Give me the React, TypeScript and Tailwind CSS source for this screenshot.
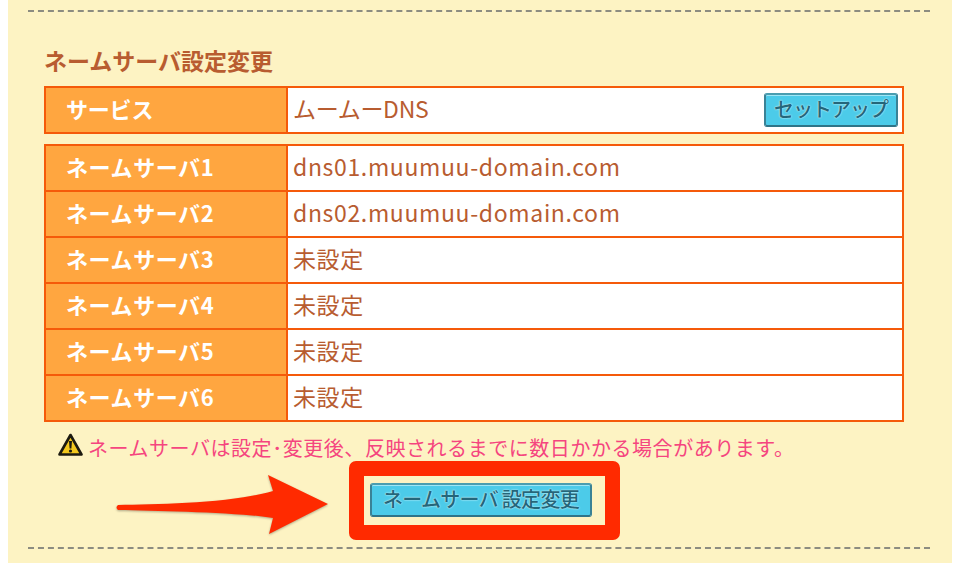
const font = "font-['Noto_Sans_CJK_JP','Noto_Sans',sans-serif]";

const servers = [
  { label: 'ネームサーバ1', value: 'dns01.muumuu-domain.com', track: 'tracking-[0.65px]' },
  { label: 'ネームサーバ2', value: 'dns02.muumuu-domain.com', track: 'tracking-[0.65px]' },
  { label: 'ネームサーバ3', value: '未設定', track: 'tracking-[0.6px]' },
  { label: 'ネームサーバ4', value: '未設定', track: 'tracking-[0.6px]' },
  { label: 'ネームサーバ5', value: '未設定', track: 'tracking-[0.6px]' },
  { label: 'ネームサーバ6', value: '未設定', track: 'tracking-[0.6px]' },
];

const Row = ({ label, value, track, labelTrack, last, children }: { label: string; value: string; track: string; labelTrack: string; last?: boolean; children?: React.ReactNode }) => (
  <div className={last ? 'flex h-[44px]' : 'flex h-[46px] border-b-2 border-[#f55a0a]'}>
    <div className={`w-[242px] shrink-0 border-r-2 border-[#f55a0a] bg-[#ffa640] pl-[20px] pb-[3px] flex items-center text-[22px] font-bold text-white ${labelTrack}`}>
      {label}
    </div>
    <div className="flex-1 bg-white pl-[5px] pr-[4px] flex items-center justify-between text-[23px] text-[#b85c30]">
      <span className={`pb-[3px] ${track}`}>{value}</span>
      {children}
    </div>
  </div>
);

const SkyButton = ({ label, className }: { label: string; className: string }) => (
  <div
    className={`flex items-center justify-center rounded-[3px] border-2 border-[#3a8296] border-t-[#4a9db0] border-b-[#2f7488] bg-[#4ccbe9] pb-[2px] font-medium text-[#24667a] shadow-[inset_0_1px_0_#9fe6f5] [text-shadow:0_0_2px_#c8f4fb,0_0_1px_#c8f4fb] ${className}`}
  >
    {label}
  </div>
);

export default function App() {
  return (
    <div className={`h-[563px] w-[960px] overflow-hidden bg-white px-2 ${font}`}>
      <div className="relative h-full bg-[#fdf3c3] px-[20px] pt-[10px]">
        <div className="mr-[2px] border-t-2 border-dashed border-[#8c8c80]" />

        <h2 className="mt-[33px] ml-[16px] text-[23px] leading-[30px] font-bold text-[#b85c30]">
          ネームサーバ設定変更
        </h2>

        <div className="mt-[11px] ml-[16px] w-[860px] border-2 border-[#f55a0a]">
          <Row label="サービス" labelTrack="tracking-[-0.2px]" value="ムームーDNS" track="tracking-[-0.3px]" last>
            <SkyButton label="セットアップ" className="h-[34px] w-[134px] text-[20px] tracking-[-1px]" />
          </Row>
        </div>

        <div className="mt-[10px] ml-[16px] w-[860px] border-2 border-[#f55a0a]">
          {servers.map((s, i) => (
            <Row key={s.label} label={s.label} labelTrack="tracking-[0.6px]" value={s.value} track={s.track} last={i === servers.length - 1} />
          ))}
        </div>

        <div className="mt-[8px] ml-[30px] flex items-center gap-[5px] text-[20px] leading-[36px] tracking-[0.55px] text-[#f5457f]">
          <svg width="25" height="24" viewBox="0 0 25 24" className="-mt-[6px] shrink-0">
            <path d="M12.5 2 L23.5 21.5 H1.5 Z" fill="#f3c81e" stroke="#1c1a10" strokeWidth="2.6" strokeLinejoin="round" />
            <path d="M11 8 h3 l-.6 7.5 h-1.8 Z" fill="#1c1a10" />
            <circle cx="12.5" cy="18" r="1.6" fill="#1c1a10" />
          </svg>
          <span className="whitespace-nowrap">ネームサーバは設定･変更後、反映されるまでに数日かかる場合があります。</span>
        </div>

        {/* annotation: red box round the submit button */}
        <div className="absolute left-[341px] top-[461px] flex h-[79px] w-[271px] items-center rounded-[7px] border-[15px] border-[#ff2a00] pl-[6px] pb-[1px]">
          <SkyButton label="ネームサーバ 設定変更" className="h-[34px] w-[222px] text-[20px] tracking-[-0.7px]" />
        </div>

        {/* annotation: red arrow */}
        <svg className="absolute left-[100px] top-[470px] drop-shadow-[0_1px_1px_rgba(0,0,0,0.3)]" width="240" height="70" viewBox="0 0 240 70">
          <path
            d="M10 35 C 50 34.5 125 33 165 21 L160 5 L220 34 L161 64 L165 48 C 125 42 50 41 10 40 Q 7 37.5 10 35 Z"
            fill="#ff2a00"
          />
        </svg>

        <div className="absolute bottom-[14px] left-[20px] right-[22px] border-t-2 border-dashed border-[#8c8c80]" />
      </div>
    </div>
  );
}
